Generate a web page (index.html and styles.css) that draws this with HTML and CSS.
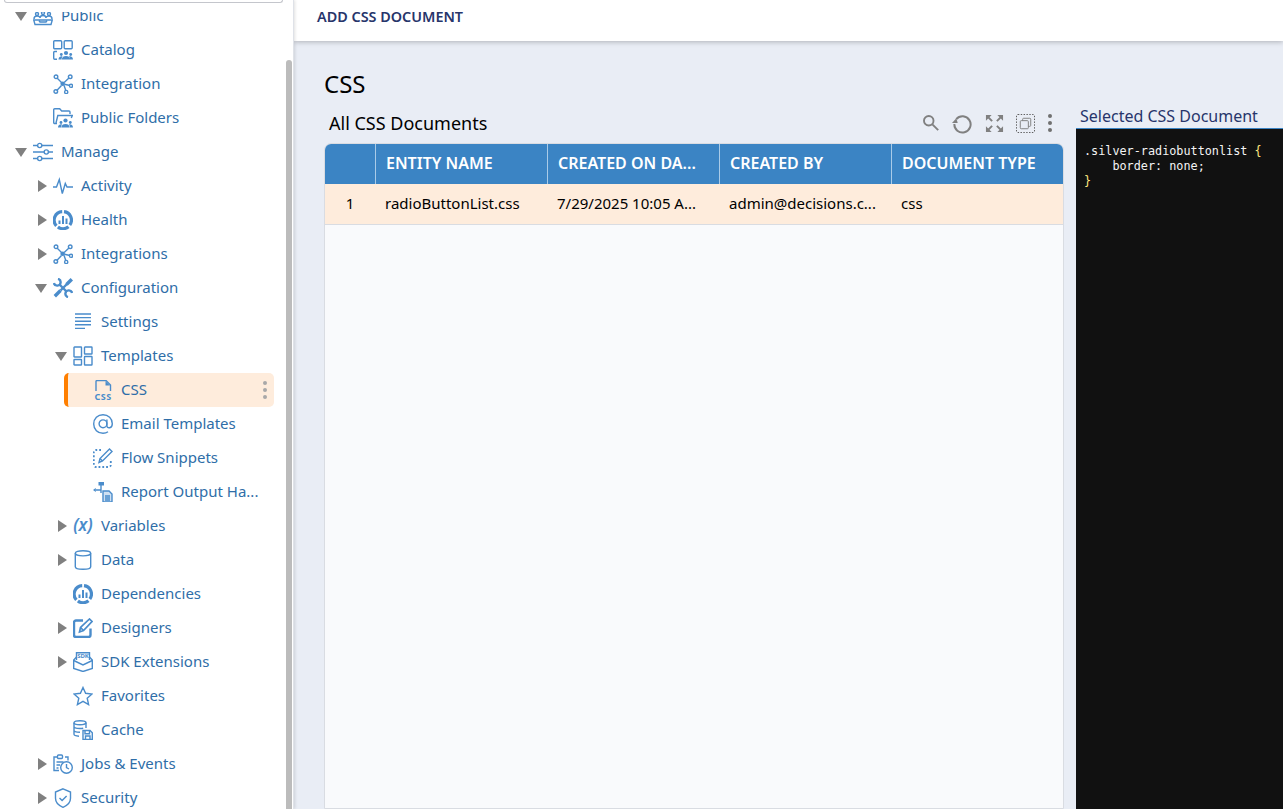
FILE: index.html
```html
<!DOCTYPE html>
<html lang="en">
<head>
<meta charset="utf-8">
<title>CSS</title>
<link rel="stylesheet" href="styles.css">
</head>
<body>
<svg class="defs" width="0" height="0" aria-hidden="true">
  <symbol id="i-public" viewBox="0 0 20 20">
    <circle cx="4" cy="8" r="1.500"/><circle cx="10" cy="7" r="1.500"/><circle cx="16" cy="8" r="1.500"/>
    <path d="M1 13c0-2 1.500-3 3-3s2.500.5 3 1.500M13 11.500c.5-1 1.500-1.500 3-1.500s3 1 3 3M7 12c0-1.500 1.500-2.500 3-2.500s3 1 3 2.500"/>
    <path d="M.7 14h18.600l-1.300 4.500H2z"/><path d="M6 14.500l1 1.500h6l1-1.500"/>
  </symbol>
  <symbol id="i-catalog" viewBox="0 0 20 20">
    <rect x=".7" y=".7" width="8" height="8" rx="1"/><rect x="11.200" y=".7" width="8" height="8" rx="1"/>
    <path d="M4 11.500H1.700a1 1 0 0 0-1 1v5.800a1 1 0 0 0 1 1H4"/>
    <g class="solid"><circle cx="13" cy="13" r="2.100"/><path d="M8.800 19.500c0-4.600 8.400-4.600 8.400 0z"/><circle cx="8.300" cy="14.500" r="1.400"/><circle cx="17.700" cy="14.500" r="1.400"/><path d="M5.500 19.500c0-3 3-3.800 4-3-.7 1-1 1.800-1 3zM20 19.500c0-3-3-3.800-4-3 .7 1 1 1.800 1 3z"/></g>
  </symbol>
  <symbol id="i-hub" viewBox="0 0 20 20">
    <path d="M4 4l4.500 4.500M16.200 3.800l-5 4.700M17 11.500l-5.500-1.300M12.700 16.200l-1.700-5M3.800 16.400l4.700-5"/>
    <circle cx="3" cy="2.800" r="1.800"/><circle cx="17.200" cy="2.800" r="1.800"/><circle cx="18" cy="11.800" r="1.600"/><circle cx="13.200" cy="18" r="1.600"/><circle cx="2.800" cy="17.500" r="1.800"/>
    <circle class="solid" cx="9.700" cy="9.800" r="2.300"/>
  </symbol>
  <symbol id="i-folder" viewBox="0 0 20 20">
    <path d="M4 15.500H1.700a1 1 0 0 1-1-1V1.700a1 1 0 0 1 1-1h5l2 2.300h7.300a1 1 0 0 1 1 1V6"/>
    <path d="M3 15l1.800-7.500h14.500l-1 2.500"/>
    <g class="solid"><circle cx="12.500" cy="12.500" r="2.100"/><path d="M8.300 19.500c0-4.600 8.400-4.600 8.400 0z"/><circle cx="8" cy="14.500" r="1.400"/><circle cx="17.300" cy="14.500" r="1.400"/><path d="M5 19.500c0-3 3-3.800 4-3-.7 1-1 1.800-1 3zM20 19.500c0-3-3-3.800-4-3 .7 1 1 1.800 1 3z"/></g>
  </symbol>
  <symbol id="i-sliders" viewBox="0 0 20 20">
    <path d="M0 3.500h4.500M9 3.500h11M0 10h11M15.500 10H20M0 16.500h4.500M9 16.500h11"/>
    <circle cx="6.700" cy="3.500" r="2.100"/><circle cx="13.300" cy="10" r="2.100"/><circle cx="6.700" cy="16.500" r="2.100"/>
  </symbol>
  <symbol id="i-pulse" viewBox="0 0 20 20"><path d="M0 11h3.500l2.800-7.500 3 14 3-10 1.700 3.500H20"/></symbol>
  <symbol id="i-donut" viewBox="0 0 20 20">
    <path class="ring" d="M3.400 15.800A8.400 8.400 0 0 1 9.200 1.700M11 1.700A8.400 8.400 0 0 1 16.800 15M15.500 16.700a8.400 8.400 0 0 1-10.600.2"/>
    <path class="bars" d="M6.500 10.500v3.500M10 6v8M13.500 8.500v5.500"/>
  </symbol>
  <symbol id="i-tools" viewBox="0 0 20 20">
    <path class="heavy" d="M1.800 18.200 7.500 12.500"/>
    <path class="thick" d="M7.500 12.500 14 6"/><path class="heavy" d="M13.500 6.500 18.800 1.200"/>
    <path class="thick" d="M6.500 6.500 13.500 13.500"/>
    <path class="thick" d="M.9 5A3.400 3.400 0 1 0 5 .9"/><path class="thick" d="M19.100 15A3.400 3.400 0 1 0 15 19.100"/>
  </symbol>
  <symbol id="i-lines" viewBox="0 0 20 20"><path d="M2 2h16M2 5.600h16M2 9.200h16M2 12.800h16M2 16.400h10"/></symbol>
  <symbol id="i-grid" viewBox="0 0 20 20">
    <rect x="1" y="1" width="7.500" height="10" rx=".5"/><rect x="11.500" y="1" width="7.500" height="7" rx=".5"/><rect x="1" y="13.500" width="7.500" height="5.500" rx=".5"/><rect x="11.500" y="10.500" width="7.500" height="8.500" rx=".5"/>
  </symbol>
  <symbol id="i-cssdoc" viewBox="0 0 20 20">
    <path d="M3 11V1.500a1 1 0 0 1 1-1h9l4.500 4.500v6"/><path class="solid" d="M12.500 1v4.500H17z"/>
    <text x="10" y="19.500" class="icon-text">CSS</text>
  </symbol>
  <symbol id="i-at" viewBox="0 0 20 20">
    <circle cx="10" cy="9.800" r="3.900"/><path d="M13.900 5.500v6.200c0 3.300 5.400 2.800 5.400-2 0-5.200-4-9-9.300-9C4.700.7.700 4.700.700 10S4.700 19.300 10 19.300c2 0 3.700-.5 5-1.500"/>
  </symbol>
  <symbol id="i-snip" viewBox="0 0 20 20">
    <path class="dash" d="M8 2H2.800A2 2 0 0 0 .8 4v13a2 2 0 0 0 2 2h13a2 2 0 0 0 2-2v-5"/>
    <path d="M6 14.500l1-4L16.500 1l2.500 2.500L9.500 13z"/><path d="M7 10.500l2.500 2.500"/>
  </symbol>
  <symbol id="i-report" viewBox="0 0 20 20">
    <rect class="solid" x="5.500" y="0" width="5.500" height="3.500"/><path class="solid" d="M0 8l2.800-2v4z"/>
    <path d="M3 8h5M8 2v9"/>
    <path class="paper" d="M10 9h6l3 3v8H10z"/><path d="M12 14h5M12 16h5M12 18h5"/>
  </symbol>
  <symbol id="i-db" viewBox="0 0 20 20">
    <ellipse cx="10" cy="3.300" rx="7.700" ry="2.600"/><path d="M2.300 3.300v13.400c0 1.500 3.500 2.600 7.700 2.600s7.700-1.100 7.700-2.600V3.300"/>
  </symbol>
  <symbol id="i-pencil" viewBox="0 0 20 20">
    <path class="thick" d="M10 2.500H3a2 2 0 0 0-2 2V17a2 2 0 0 0 2 2h12.500a2 2 0 0 0 2-2v-6.500"/>
    <path class="med" d="M6.500 14l1-4.500L16.500 1 19 3.500 10.500 12.500z"/><path class="med" d="M7.500 9.500l3 3"/>
  </symbol>
  <symbol id="i-sdk" viewBox="0 0 20 20">
    <path d="M3.500 8V.7h13V8"/><text x="10" y="6.300" class="sdk-text">SDK</text>
    <path d="M3.500 5L.7 8v8.500l9.300 3 9.300-3V8l-2.800-3"/><path d="M.7 8.500 10 13l9.300-4.500"/>
  </symbol>
  <symbol id="i-star" viewBox="0 0 20 20"><path d="M10 1.500l2.600 5.800 6.400.7-4.800 4.200 1.400 6.300L10 15.300l-5.600 3.200 1.400-6.300L1 8l6.400-.7z"/></symbol>
  <symbol id="i-cache" viewBox="0 0 20 20">
    <ellipse cx="7" cy="2.700" rx="6" ry="2"/><path d="M1 2.700v11.600c0 1 1.800 1.700 5 1.900M13 2.700V8M1 6.500c0 1.200 2.700 2 6 2 1.200 0 2.300-.1 3.200-.3M1 10.300c0 1.100 2.300 1.900 6 2"/>
    <path d="M10 10.500h7l2.300 2.300v6.700H10z"/><path d="M12 10.500v3.300h4.500v-3.300M12.500 19.500v-3.500h4.500v3.500"/>
  </symbol>
  <symbol id="i-jobs" viewBox="0 0 20 20">
    <path d="M4 3H1v13.500h5M12 3h3v3.500"/><rect x="4.500" y="1" width="5" height="3.500" rx="1"/>
    <path d="M3.500 8h7M3.500 11h3.500M3.500 14h2"/>
    <circle cx="13.500" cy="13.500" r="5.800"/><path d="M13.500 10v3.700l2.500 1.300"/>
  </symbol>
  <symbol id="i-shield" viewBox="0 0 20 20">
    <path d="M10 .8 17.500 4v6.300c0 4.200-3.300 7.300-7.500 9-4.200-1.700-7.500-4.800-7.500-9V4z"/><path d="M6.500 10l2.600 2.600 4.500-4.600"/>
  </symbol>
</svg>

<div class="app">
  <aside class="sidebar">
    <div class="search-area"><div class="search-edge"></div></div>
    <nav class="tree-viewport">
      <ul class="tree">
        <li class="row d0"><span class="arrow down"></span><svg class="ico"><use href="#i-public"/></svg><span class="label">Public</span></li>
        <li class="row d1"><span class="arrow none"></span><svg class="ico"><use href="#i-catalog"/></svg><span class="label">Catalog</span></li>
        <li class="row d1"><span class="arrow none"></span><svg class="ico"><use href="#i-hub"/></svg><span class="label">Integration</span></li>
        <li class="row d1"><span class="arrow none"></span><svg class="ico"><use href="#i-folder"/></svg><span class="label">Public Folders</span></li>
        <li class="row d0"><span class="arrow down"></span><svg class="ico"><use href="#i-sliders"/></svg><span class="label">Manage</span></li>
        <li class="row d1"><span class="arrow right"></span><svg class="ico"><use href="#i-pulse"/></svg><span class="label">Activity</span></li>
        <li class="row d1"><span class="arrow right"></span><svg class="ico"><use href="#i-donut"/></svg><span class="label">Health</span></li>
        <li class="row d1"><span class="arrow right"></span><svg class="ico"><use href="#i-hub"/></svg><span class="label">Integrations</span></li>
        <li class="row d1"><span class="arrow down"></span><svg class="ico"><use href="#i-tools"/></svg><span class="label">Configuration</span></li>
        <li class="row d2"><span class="arrow none"></span><svg class="ico"><use href="#i-lines"/></svg><span class="label">Settings</span></li>
        <li class="row d2"><span class="arrow down"></span><svg class="ico"><use href="#i-grid"/></svg><span class="label">Templates</span></li>
        <li class="row selected"><svg class="ico"><use href="#i-cssdoc"/></svg><span class="label">CSS</span><span class="kebab"><i></i><i></i><i></i></span></li>
        <li class="row d3"><span class="arrow none"></span><svg class="ico"><use href="#i-at"/></svg><span class="label">Email Templates</span></li>
        <li class="row d3"><span class="arrow none"></span><svg class="ico"><use href="#i-snip"/></svg><span class="label">Flow Snippets</span></li>
        <li class="row d3"><span class="arrow none"></span><svg class="ico"><use href="#i-report"/></svg><span class="label">Report Output Ha...</span></li>
        <li class="row d2"><span class="arrow right"></span><svg class="ico"><text x="10" y="15" class="var-text" text-anchor="middle">(x)</text></svg><span class="label">Variables</span></li>
        <li class="row d2"><span class="arrow right"></span><svg class="ico"><use href="#i-db"/></svg><span class="label">Data</span></li>
        <li class="row d2"><span class="arrow none"></span><svg class="ico"><use href="#i-donut"/></svg><span class="label">Dependencies</span></li>
        <li class="row d2"><span class="arrow right"></span><svg class="ico"><use href="#i-pencil"/></svg><span class="label">Designers</span></li>
        <li class="row d2"><span class="arrow right"></span><svg class="ico"><use href="#i-sdk"/></svg><span class="label">SDK Extensions</span></li>
        <li class="row d2"><span class="arrow none"></span><svg class="ico"><use href="#i-star"/></svg><span class="label">Favorites</span></li>
        <li class="row d2"><span class="arrow none"></span><svg class="ico"><use href="#i-cache"/></svg><span class="label">Cache</span></li>
        <li class="row d1"><span class="arrow right"></span><svg class="ico"><use href="#i-jobs"/></svg><span class="label">Jobs &amp; Events</span></li>
        <li class="row d1"><span class="arrow right"></span><svg class="ico"><use href="#i-shield"/></svg><span class="label">Security</span></li>
      </ul>
    </nav>
    <div class="scrollbar"></div>
  </aside>

  <main class="main">
    <header class="topbar"><a class="action">ADD CSS DOCUMENT</a></header>
    <div class="content">
      <h1 class="page-title">CSS</h1>
      <div class="panels">
        <section class="list-panel">
          <div class="list-head">
            <h2 class="list-title">All CSS Documents</h2>
            <div class="tools">
              <svg class="tool t-search" viewBox="0 0 20 20"><circle cx="7.500" cy="7.500" r="5.300"/><path d="M11.500 11.500 18 18"/></svg>
              <svg class="tool t-refresh" viewBox="0 0 22 22"><path d="M4.500 6.500A8.500 8.500 0 1 1 2.500 11.500"/><path class="tool-fill" d="M0 10.500h6L4.500 5.500z"/></svg>
              <svg class="tool t-expand" viewBox="0 0 20 20"><path d="M2 2l5.500 5.500M18 2l-5.500 5.500M2 18l5.500-5.500M18 18l-5.500-5.500"/><path class="tool-fill" d="M1 1h6L1 7zM19 1h-6l6 6zM1 19h6l-6-6zM19 19h-6l6-6z"/></svg>
              <svg class="tool t-select" viewBox="0 0 20 20"><rect class="dashed" x=".5" y=".5" width="19" height="19" rx="1.500"/><rect x="7" y="4.500" width="8.500" height="8.500" rx="1"/><rect class="white" x="4.500" y="7" width="8.500" height="8.500" rx="1"/></svg>
              <span class="tool-kebab"><i></i><i></i><i></i></span>
            </div>
          </div>
          <div class="grid">
            <div class="grid-row grid-header">
              <div class="cell num"></div>
              <div class="cell">ENTITY NAME</div>
              <div class="cell">CREATED ON DA...</div>
              <div class="cell">CREATED BY</div>
              <div class="cell">DOCUMENT TYPE</div>
            </div>
            <div class="grid-row grid-data">
              <div class="cell num">1</div>
              <div class="cell">radioButtonList.css</div>
              <div class="cell">7/29/2025 10:05 A...</div>
              <div class="cell">admin@decisions.c...</div>
              <div class="cell">css</div>
            </div>
          </div>
        </section>
        <section class="doc-panel">
          <h2 class="doc-title">Selected CSS Document</h2>
          <pre class="code"><span class="cw">.silver-radiobuttonlist </span><span class="cy">{</span>
<span class="cw">    border: none;</span>
<span class="cy">}</span></pre>
        </section>
      </div>
    </div>
  </main>
</div>
</body>
</html>
```
FILE: styles.css
```css
* { box-sizing: border-box; }
html, body { margin: 0; height: 100%; overflow: hidden; }
body { font-family: "Noto Sans", "Open Sans", sans-serif; color: #000; background: #e9edf5; }
.defs { position: absolute; }
.app { display: flex; height: 809px; }

/* Sidebar */
.sidebar { position: relative; width: 294px; flex: none; background: #fff; display: flex; flex-direction: column; border-right: 1px solid #dfe2e8; box-shadow: 1px 0 3px rgba(0,0,0,.12); z-index: 2; }
.search-area { height: 12px; flex: none; background: #fff; padding: 0 10px 0 4px; }
.search-edge { height: 3px; background: #fff; border: 1px solid #c4c6cc; border-top: 0; border-radius: 0 0 5px 5px; }
.tree-viewport { flex: 1; overflow: hidden; }
.tree { list-style: none; margin: -13px 0 0; padding: 0; }
.row { display: flex; align-items: center; height: 34px; font-size: 15px; color: #2f6ea8; white-space: nowrap; }
.d0 { padding-left: 13px; }
.d1 { padding-left: 33px; }
.d2 { padding-left: 53px; }
.d3 { padding-left: 73px; }
.arrow { width: 20px; height: 34px; flex: none; position: relative; }
.arrow::after { content: ""; position: absolute; top: 50%; }
.arrow.down::after { left: 2px; margin-top: -4px; border-left: 6px solid transparent; border-right: 6px solid transparent; border-top: 9px solid #808080; }
.arrow.right::after { left: 5px; margin-top: -6px; border-top: 6px solid transparent; border-bottom: 6px solid transparent; border-left: 9px solid #808080; }
.ico { width: 20px; height: 20px; flex: none; fill: none; stroke: #4a8ccb; stroke-width: 1.4; overflow: visible; }
.solid { fill: #4a8ccb; stroke: none; }
.paper { fill: #cfe0f2; }
.thick { stroke-width: 2.400; }
.heavy { stroke-width: 3.400; }
.ring { stroke-width: 3.200; }
.med { stroke-width: 1.700; }
.bars { stroke-width: 2; }
.dash { stroke-dasharray: 1.800 2; stroke-width: 1.800; }
.icon-text { font: 700 9px "Noto Sans", sans-serif; fill: #4a8ccb; stroke: none; text-anchor: middle; letter-spacing: .5px; }
.sdk-text { font: 700 6px "Noto Sans", sans-serif; fill: #4a8ccb; stroke: none; text-anchor: middle; }
.var-text { font: italic 600 17px "Noto Sans", sans-serif; fill: #4a8ccb; stroke: none; }
.label { margin-left: 8px; padding-bottom: 2px; }
.selected { margin-left: 64px; width: 210px; padding-left: 25px; border-left: 4px solid #ff7f00; border-radius: 5px; background: #feecdc; position: relative; }
.kebab { position: absolute; right: 7px; top: 8px; display: flex; flex-direction: column; gap: 3px; }
.kebab i { width: 4px; height: 4px; border-radius: 50%; background: #a8a8a8; display: block; }
.scrollbar { position: absolute; left: 286px; width: 6px; top: 60px; bottom: 0; background: #bcbcbc; border-radius: 3px 3px 0 0; }

/* Main */
.main { flex: 1; min-width: 0; display: flex; flex-direction: column; }
.topbar { height: 41px; flex: none; background: #fff; box-shadow: 0 1px 5px rgba(0,0,0,.25); padding: 9px 0 0 23px; }
.action { font-size: 14.4px; font-weight: 600; line-height: 16px; color: #27356b; display: block; }
.content { flex: 1; min-height: 0; padding: 29px 0 0 30px; display: flex; flex-direction: column; }
.page-title { margin: 0; font-size: 24px; font-weight: 400; line-height: 27px; height: 38px; flex: none; }
.panels { flex: 1; min-height: 0; display: flex; gap: 12px; }
.list-panel { width: 740px; flex: none; display: flex; flex-direction: column; }
.list-head { height: 35px; flex: none; display: flex; align-items: center; justify-content: space-between; padding: 0 5px 5px 5px; }
.list-title { margin: 0; font-size: 18px; font-weight: 400; line-height: 20px; }
.tools { display: flex; align-items: center; gap: 12px; }
.tool { width: 19px; height: 19px; fill: none; stroke: #808080; stroke-width: 2.100; flex: none; }
.t-search { width: 18px; height: 18px; }
.t-refresh { width: 21px; height: 21px; }
.tool-fill { fill: #808080; stroke: none; }
.t-select { stroke-width: 1; }
.dashed { stroke: #555; stroke-dasharray: 1.500 1.500; }
.white { fill: #e9edf5; }
.tool-kebab { display: flex; flex-direction: column; gap: 3px; width: 5px; margin: 0 6px 0 1px; }
.tool-kebab i { display: block; width: 4px; height: 4px; border-radius: 50%; background: #707070; }

.grid { flex: 1; background: #f9fafc; border: 1px solid #d9dce2; border-radius: 7px 7px 0 0; }
.grid-row { display: grid; grid-template-columns: 50px repeat(4, 172px); align-items: center; }
.grid-header { height: 40px; background: #3b84c4; color: #fff; font-size: 16px; font-weight: 600; border-radius: 6px 6px 0 0; }
.grid-header .cell { height: 40px; line-height: 38px; padding-left: 10px; border-left: 1px solid #a9cbe8; }
.grid-header .cell:first-child { border-left: 0; }
.grid-data { height: 41px; padding-bottom: 2px; background: #feecdc; font-size: 15px; border-bottom: 1px solid #d9dce2; }
.cell { white-space: nowrap; padding: 0 10px; }
.num { text-align: center; }

.doc-panel { flex: 1; min-width: 0; display: flex; flex-direction: column; }
.doc-title { margin: 0; padding: 0 0 0 4px; height: 20px; font-size: 16px; font-weight: 400; line-height: 17px; color: #27356b; flex: none; }
.code { margin: 0; flex: 1; background: #111; border-top: 1px solid #3b84c4; padding: 15px 0 0 8px; font: 11.8px/15px "DejaVu Sans Mono", "Liberation Mono", monospace; }
.cw { color: #f4f4f4; }
.cy { color: #ffe680; }
```
